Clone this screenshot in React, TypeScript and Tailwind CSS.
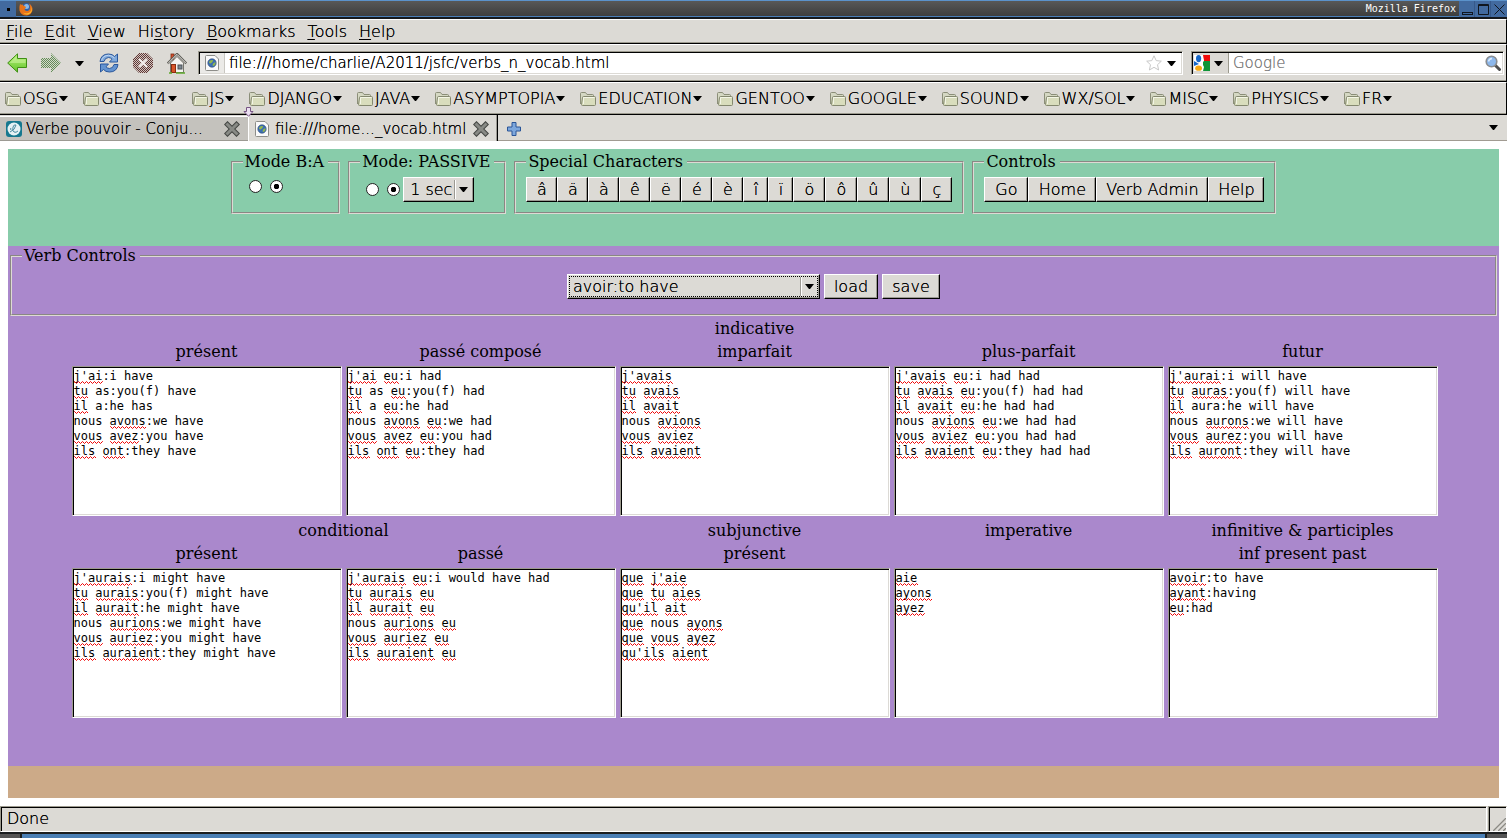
import React from "react";

const RAISED =
  "border border-t-white border-l-white border-b-black border-r-black bg-[#dcdad5] shadow-[inset_-1px_-1px_0_#9c9a93]";
const SUNKEN =
  "border border-t-[#9c9a8e] border-l-[#9c9a8e] border-b-white border-r-white bg-white shadow-[inset_1px_1px_0_#000,inset_-1px_-1px_0_#dcdad5]";
const BAR =
  "flex items-center border-t border-b border-r border-t-white border-b-black border-r-black bg-[#dcdad5] shadow-[inset_0_-1px_0_#9c9a8e]";
const SANS = "font-['DejaVu_Sans_Light','DejaVu_Sans',sans-serif] font-extralight [text-shadow:0_0_0_currentColor]";

function Triangle() {
  return (
    <svg width="9" height="5" viewBox="0 0 9 5" className="shrink-0" aria-hidden="true">
      <path d="M0 0H9L5 5H4Z" fill="#000" />
    </svg>
  );
}

function FolderIcon() {
  return (
    <svg width="16" height="14" viewBox="0 0 16 14" className="shrink-0" aria-hidden="true">
      <path d="M.5 12V1.500Q.5.5 1.500.5H5.500L7 2.500H12.500Q13.500 2.500 13.500 3.500V4.500" fill="#d5d8c3" stroke="#8b8e78" />
      <path d="M.5 12V2" stroke="#8b8e78" />
      <path d="M3.500 4.500H14.500Q15.500 4.500 15.500 5.500V12.500Q15.500 13.500 14.500 13.500H2.500Q1.500 13.500 1.500 12.500L2.500 5.500Q2.600 4.500 3.500 4.500Z" fill="#d9ddbd" stroke="#84886f" />
      <path d="M3.500 12V5.500H14.500" fill="none" stroke="#f3f5e6" />
    </svg>
  );
}

function FirefoxIcon() {
  return (
    <svg width="14" height="14" viewBox="0 0 14 14" aria-hidden="true">
      <circle cx="7.500" cy="6.500" r="5.500" fill="#2d5fa8" />
      <circle cx="7.500" cy="4.500" r="2.500" fill="#8cb9e6" />
      <path d="M1 2Q2 3 3.500 2.600Q4.500 3 4.500 4Q7 3.800 7 5.500Q6 6 5.500 7Q6 9.500 8.500 9Q11 8.500 11 5Q10.800 3 10 1.500Q13.800 4 13.500 8Q12.500 13 7.500 13.500Q2 13.500 .5 8.500Q0 5 1 2Z" fill="#e8731a" />
      <path d="M12 4Q13.500 8 10.500 10.500Q7.500 12.500 4 10.500Q6 13 9 12.500Q13 11 13 7Z" fill="#fbc02d" />
    </svg>
  );
}

function BackIcon() {
  return (
    <svg width="20" height="20" viewBox="0 0 20 20" aria-hidden="true">
      <defs>
        <linearGradient id="green" x1="0" y1="0" x2="0" y2="1">
          <stop offset="0" stopColor="#b9f27c" />
          <stop offset="1" stopColor="#62c42a" />
        </linearGradient>
      </defs>
      <path d="M.7 10L10.500.8V5.500H19.500V14.500H10.500V19.200Z" fill="url(#green)" stroke="#3f8f14" />
      <path d="M2.500 10L9.500 3.300V6.500H18.500V10Z" fill="#d3f7a8" opacity=".5" />
    </svg>
  );
}

function ForwardIcon() {
  return (
    <svg width="20" height="20" viewBox="0 0 20 20" aria-hidden="true">
      <defs>
        <pattern id="stipple-green" width="2" height="2" patternUnits="userSpaceOnUse">
          <rect width="2" height="2" fill="#d3dcc8" />
          <rect width="1" height="1" fill="#64885a" />
          <rect x="1" y="1" width="1" height="1" fill="#64885a" />
        </pattern>
      </defs>
      <path d="M20 10L10 0V5H0V15H10V20Z" fill="url(#stipple-green)" />
    </svg>
  );
}

function ReloadIcon() {
  return (
    <svg width="20" height="20" viewBox="0 0 20 20" aria-hidden="true">
      <path d="M1 8.500Q2 1 9.500 1Q13.500 1 15.500 3.500L18.500 1V9H10.500L13 6.200Q11.500 4.500 9.500 4.500Q6 4.500 5 8.500Z" fill="#7fa9dc" stroke="#2a579c" />
      <path d="M19 11.500Q18 19 10.500 19Q6.500 19 4.500 16.500L1.500 19V11H9.500L7 13.800Q8.500 15.500 10.500 15.500Q14 15.500 15 11.500Z" fill="#6393d0" stroke="#2a579c" />
      <path d="M2.500 7.500Q4 2.500 9.500 2.300Q13 2.500 15.500 5" fill="none" stroke="#c0d6f1" />
    </svg>
  );
}

function StopIcon() {
  return (
    <svg width="20" height="20" viewBox="0 0 20 20" aria-hidden="true">
      <defs>
        <pattern id="stipple-red" width="2" height="2" patternUnits="userSpaceOnUse">
          <rect width="2" height="2" fill="#d2c3be" />
          <rect width="1" height="1" fill="#5e3836" />
          <rect x="1" y="1" width="1" height="1" fill="#5e3836" />
        </pattern>
      </defs>
      <path d="M6 0H14L20 6V14L14 20H6L0 14V6Z" fill="url(#stipple-red)" />
      <path d="M6 6L14 14M14 6L6 14" stroke="#f2ecea" strokeWidth="2.200" />
    </svg>
  );
}

function HomeIcon() {
  return (
    <svg width="20" height="21" viewBox="0 0 20 21" aria-hidden="true">
      <rect x="4" y="1" width="3" height="6" fill="#d9512c" stroke="#7a2a12" strokeWidth=".8" />
      <path d="M3.500 10L10 3.500L16.500 10V19.500H3.500Z" fill="#f4f3f0" stroke="#77756d" />
      <path d="M.7 10.500L10 1L19.300 10.500" fill="none" stroke="#5d5c56" strokeWidth="2.400" />
      <path d="M1.200 10.200L10 1.400L18.800 10.200" fill="none" stroke="#efeeea" strokeWidth="1" />
      <rect x="4.500" y="11.500" width="4" height="8" fill="#d9552a" stroke="#8a2d10" />
      <rect x="11" y="12" width="4" height="4" fill="#7c8790" stroke="#4c5358" />
      <path d="M2 20H5M9 20H18" stroke="#5ea82c" strokeWidth="1.600" />
    </svg>
  );
}

function PageIcon() {
  return (
    <svg width="14" height="16" viewBox="0 0 14 16" className="shrink-0" aria-hidden="true">
      <path d="M1.500.5H10L13.500 4V14.500Q13.500 15.500 12.500 15.500H1.500Q.5 15.500.5 14.500V1.500Q.5.5 1.500.5Z" fill="#fafafa" stroke="#8d8d89" />
      <circle cx="7" cy="8" r="4.200" fill="#3c6eb4" stroke="#27436f" strokeWidth=".6" />
      <path d="M4.500 6Q6 4.500 8 5L7.500 7L5.500 8.500L4 8ZM8 8.500L10.500 7Q11 9.500 9 11L7.500 10.500Z" fill="#93b84c" />
    </svg>
  );
}

function GoogleIcon() {
  return (
    <svg width="16" height="16" viewBox="0 0 16 16" className="shrink-0" aria-hidden="true">
      <rect width="16" height="16" fill="#fff" />
      <path d="M8 0H16V6H10Z" fill="#f00a0a" />
      <path d="M9 6H16V16H9Z" fill="#0f9438" />
      <path d="M0 6L5 9L0 11Z" fill="#1667c8" />
      <path d="M9 0L10 6L8 8L10 12L9 16L6 16V0Z" fill="#fff" />
      <ellipse cx="4.600" cy="3.600" rx="2.600" ry="3.600" fill="#1667c8" />
      <ellipse cx="4.600" cy="13.200" rx="3.400" ry="2.600" fill="#f8a912" />
    </svg>
  );
}

function CloseIcon() {
  return (
    <svg width="16" height="16" viewBox="0 0 16 16" aria-hidden="true">
      <path d="M3.500 3.500L12.500 12.500M12.500 3.500L3.500 12.500" stroke="#444643" strokeWidth="5" strokeLinecap="square" />
      <path d="M3.500 3.500L12.500 12.500M12.500 3.500L3.500 12.500" stroke="#888a85" strokeWidth="3" strokeLinecap="square" />
    </svg>
  );
}

const MENUS: [string, string, string][] = [
  ["", "F", "ile"],
  ["", "E", "dit"],
  ["", "V", "iew"],
  ["Hi", "s", "tory"],
  ["", "B", "ookmarks"],
  ["", "T", "ools"],
  ["", "H", "elp"],
];

const BOOKMARKS = [
  "OSG", "GEANT4", "JS", "DJANGO", "JAVA", "ASYMPTOPIA", "EDUCATION",
  "GENTOO", "GOOGLE", "SOUND", "WX/SOL", "MISC", "PHYSICS", "FR",
];

function TitleBar() {
  return (
    <div className="flex h-[19px] items-center border-t border-b-2 border-t-[#5b92cb] border-b-[#15181c] bg-linear-to-b from-[#585858] to-[#3c3c3c] shadow-[inset_0_-1px_0_#4a7db5]">
      <div className="flex h-4 w-4 items-center justify-center bg-[#426a9f]">
        <span className="h-[3px] w-[3px] bg-black" />
      </div>
      <span className="ml-[3px]"><FirefoxIcon /></span>
      <span className="ml-auto mr-[3px] font-['DejaVu_Sans_Mono',monospace] text-[10px] leading-4 text-white [text-shadow:none]">
        Mozilla Firefox
      </span>
      <svg width="48" height="16" viewBox="0 0 48 16" aria-hidden="true">
        <rect width="48" height="16" fill="#426a9f" />
        <path d="M15.500 0V16M31.500 0V16" stroke="#36598a" />
        <rect x="3.500" y="11.500" width="10" height="2" fill="none" stroke="#10161f" />
        <path d="M19.500 3.500H29.500V13.500H19.500ZM19.500 4.500H29.500" fill="none" stroke="#10161f" />
        <path d="M35.500 3.500L45.500 13.500M45.500 3.500L35.500 13.500" stroke="#10161f" />
      </svg>
    </div>
  );
}

function MenuBar() {
  return (
    <nav className={`${BAR} h-[25px] gap-[12px] pl-[6px]`} aria-label="Menu">
      {MENUS.map(([pre, key, post]) => (
        <button key={key + post} type="button" className="leading-[20px]">
          {pre}
          <span className="underline underline-offset-2">{key}</span>
          {post}
        </button>
      ))}
    </nav>
  );
}

function NavBar() {
  return (
    <div className={`${BAR} h-[38px] pl-[7px] pr-[2px]`}>
      <button type="button" aria-label="Back"><BackIcon /></button>
      <button type="button" aria-label="Forward" className="ml-[14px]"><ForwardIcon /></button>
      <button type="button" aria-label="Recent pages" className="ml-[14px]"><Triangle /></button>
      <button type="button" aria-label="Reload" className="ml-[15px]"><ReloadIcon /></button>
      <button type="button" aria-label="Stop" className="ml-[14px]"><StopIcon /></button>
      <button type="button" aria-label="Home page" className="ml-[14px]"><HomeIcon /></button>
      <div className={`${SUNKEN} ml-[11px] flex h-6 min-w-0 flex-1 items-center pr-[6px]`}>
        <span className="m-px flex h-5 w-[25px] items-center justify-center border-r border-[#c9c7c1] bg-[#ebeae7]">
          <PageIcon />
        </span>
        <input
          aria-label="Location"
          defaultValue="file:///home/charlie/A2011/jsfc/verbs_n_vocab.html"
          className="ml-[3px] h-5 min-w-0 flex-1 bg-transparent text-[15px] outline-none"
        />
        <svg width="16" height="16" viewBox="0 0 16 16" aria-hidden="true">
          <path d="M8 .8L10.200 5.600L15.300 6.200L11.500 9.700L12.600 15L8 12.300L3.400 15L4.500 9.700L.7 6.200L5.800 5.600Z" fill="#fff" stroke="#c8c8c8" />
        </svg>
        <button type="button" aria-label="Show history" className="ml-[5px]"><Triangle /></button>
      </div>
      <div className={`${SUNKEN} ml-[8px] flex h-6 w-[313px] items-center pr-[2px]`}>
        <button type="button" aria-label="Search engine" className="m-px flex h-5 w-9 items-center gap-[4px] border-r border-[#9c9a8e] bg-[#dcdad5] pl-px">
          <GoogleIcon />
          <Triangle />
        </button>
        <input aria-label="Search" placeholder="Google" className="ml-[3px] h-5 min-w-0 flex-1 bg-transparent text-[15px] outline-none placeholder:text-[#808080]" />
        <svg width="16" height="16" viewBox="0 0 16 16" aria-hidden="true">
          <path d="M10 10L14.500 14.500" stroke="#4e4e4e" strokeWidth="3" strokeLinecap="round" />
          <circle cx="6.500" cy="6.500" r="5.300" fill="#8db8ec" stroke="#8a8d90" strokeWidth="1.600" />
          <path d="M3.500 6.500Q4 3.800 7 3.500" stroke="#dcebfb" strokeWidth="1.500" fill="none" />
        </svg>
      </div>
    </div>
  );
}

function BookmarkBar() {
  return (
    <div className={`${BAR} relative h-[33px] gap-[15px] pl-[5px]`}>
      {BOOKMARKS.map((name) => (
        <button key={name} type="button" className="flex shrink-0 items-center leading-[20px]">
          <FolderIcon />
          <span className="ml-[2px] mr-px">{name}</span>
          <Triangle />
        </button>
      ))}
      <svg width="11" height="10" viewBox="0 0 11 10" className="absolute left-[243px] top-[24px]" aria-hidden="true">
        <path d="M3.500.5H7.500V4.500H10L5.500 9.300L1 4.500H3.500Z" fill="#eadff0" stroke="#775484" />
      </svg>
    </div>
  );
}

function TabBar() {
  return (
    <div className="flex h-[26px] items-end bg-[#dcdad5] text-[15px] shadow-[inset_0_-1px_0_#a19b92]">
      <div className="flex h-[25px] w-[248px] items-center border-t border-b border-t-white border-b-[#9c9a93] bg-[#c4c2bd] pl-[6px] pr-[8px]">
        <svg width="16" height="16" viewBox="0 0 16 16" className="shrink-0" aria-hidden="true">
          <rect width="16" height="16" rx="3" fill="#15788f" />
          <circle cx="8" cy="8" r="6.500" fill="#e5f2f5" />
          <path d="M4 11Q9 9 10 4Q8 3 7 6Q6 10 8 11Q10 12 12 10M5 7Q4 8 5 9" fill="none" stroke="#4a8ba0" />
        </svg>
        <button type="button" className="ml-[4px] truncate leading-[20px]">Verbe pouvoir - Conju...</button>
        <button type="button" aria-label="Close tab" className="ml-auto"><CloseIcon /></button>
      </div>
      <div className="flex h-[26px] w-[250px] items-center border-l border-r border-l-white border-r-black bg-[#dcdad5] pl-[6px] pr-[8px] pt-[2px] shadow-[inset_-1px_0_0_#9c9a93]">
        <PageIcon />
        <button type="button" className="ml-[6px] shrink-0 leading-[20px]">file:///home..._vocab.html</button>
        <button type="button" aria-label="Close tab" className="ml-auto"><CloseIcon /></button>
      </div>
      <button type="button" aria-label="New tab" className="mb-[5px] ml-[9px]">
        <svg width="14" height="14" viewBox="0 0 14 14" aria-hidden="true">
          <path d="M5 .5H9V5H13.500V9H9V13.500H5V9H.5V5H5Z" fill="#7da7dc" stroke="#2a5598" />
        </svg>
      </button>
      <button type="button" aria-label="List all tabs" className="mb-[11px] ml-auto mr-[9px]"><Triangle /></button>
    </div>
  );
}

function Group({ title, className = "", children }: { title: string; className?: string; children: React.ReactNode }) {
  return (
    <fieldset className={`border-2 border-[#dedad4] px-[10px] [border-style:groove] ${className}`}>
      <legend className="pl-[2px] pr-[4px] leading-[19px]">{title}</legend>
      {children}
    </fieldset>
  );
}

function Radio({ name, label, checked }: { name: string; label: string; checked?: boolean }) {
  return (
    <input
      type="radio"
      name={name}
      aria-label={label}
      defaultChecked={checked}
      className="h-[13px] w-[13px] shrink-0 appearance-none rounded-full border border-[#222] bg-white checked:bg-[radial-gradient(circle,#000_0_2.5px,#fff_3px)]"
    />
  );
}

function PushButton({ label, className = "" }: { label: string; className?: string }) {
  return (
    <button type="button" className={`${RAISED} ${SANS} h-[25px] leading-[20px] ${className}`}>
      {label}
    </button>
  );
}

function DropDown({ label, value, className = "", focused }: { label: string; value: string; className?: string; focused?: boolean }) {
  return (
    <div className={`relative ${className}`}>
      <select aria-label={label} defaultValue={value} className={`${RAISED} ${SANS} block h-[25px] w-full appearance-none leading-[20px] outline-none ${focused ? "pl-[5px]" : "pl-[6px]"}`}>
        <option>{value}</option>
      </select>
      <span className="pointer-events-none absolute inset-y-[3px] right-[3px] flex w-[16px] items-center justify-center border-l border-white shadow-[-1px_0_0_#9c9a93]">
        <Triangle />
      </span>
      {focused && <span className="pointer-events-none absolute inset-[2px] border border-dotted border-black" />}
    </div>
  );
}

type Mark = [row: number, col: number, length: number];

/* Words wrapped in underscores are flagged by the spell checker. */
function parse(source: string): { text: string; marks: Mark[] } {
  const marks: Mark[] = [];
  const text = source
    .split("|")
    .map((line, row) => {
      let out = "";
      line.split("_").forEach((part, i) => {
        if (i % 2 === 1) marks.push([row, out.length, part.length]);
        out += part;
      });
      return out;
    })
    .join("\n");
  return { text, marks };
}

/* Advance of one DejaVu Sans Mono character at 12px. */
const ADVANCE = 12 * 0.602;

function Squiggle({ row, col, length }: { row: number; col: number; length: number }) {
  const left = Math.round(col * ADVANCE);
  const width = Math.round((col + length) * ADVANCE) - left;
  let d = "M-1 1.5";
  for (let x = 0; x <= width + 2; x += 2) d += `L${x + 0.5} ${x % 4 === 0 ? 0.5 : 2.5}`;
  return (
    <svg width={width} height="3" className="absolute overflow-hidden" style={{ left, top: row * 15 + 12 }}>
      <path d={d} fill="none" stroke="#f00000" />
    </svg>
  );
}

function VerbBox({ label, source }: { label: string; source: string }) {
  const { text, marks } = parse(source);
  return (
    <div className="relative font-['DejaVu_Sans_Mono',monospace] text-[12px] leading-[15px]">
      <textarea
        aria-label={label}
        spellCheck={false}
        defaultValue={text}
        className={`${SUNKEN} block h-[150px] w-full resize-none overflow-hidden px-px pt-[2px] outline-none`}
      />
      <div className="pointer-events-none absolute left-[2px] top-[3px]" aria-hidden="true">
        {marks.map(([row, col, length]) => (
          <Squiggle key={`${row}-${col}`} row={row} col={col} length={length} />
        ))}
      </div>
    </div>
  );
}

const INDICATIVE = [
  { label: "présent", source: "_j'ai_:i have|_tu_ as:you(f) have|_il_ a:he has|nous _avons_:we have|_vous_ _avez_:you have|_ils_ _ont_:they have" },
  { label: "passé composé", source: "_j'ai_ _eu_:i had|_tu_ as _eu_:you(f) had|_il_ a _eu_:he had|nous _avons_ _eu_:we had|_vous_ _avez_ _eu_:you had|_ils_ _ont_ _eu_:they had" },
  { label: "imparfait", source: "_j'avais_|_tu_ _avais_|_il_ _avait_|nous _avions_|_vous_ _aviez_|_ils_ _avaient_" },
  { label: "plus-parfait", source: "_j'avais_ _eu_:i had had|_tu_ _avais_ _eu_:you(f) had had|_il_ _avait_ _eu_:he had had|nous _avions_ _eu_:we had had|_vous_ _aviez_ _eu_:you had had|_ils_ _avaient_ _eu_:they had had" },
  { label: "futur", source: "_j'aurai_:i will have|_tu_ _auras_:you(f) will have|_il_ aura:he will have|nous _aurons_:we will have|_vous_ _aurez_:you will have|_ils_ _auront_:they will have" },
];

const OTHERS = [
  { label: "présent", source: "_j'aurais_:i might have|_tu_ _aurais_:you(f) might have|_il_ _aurait_:he might have|nous _aurions_:we might have|_vous_ _auriez_:you might have|_ils_ _auraient_:they might have" },
  { label: "passé", source: "_j'aurais_ _eu_:i would have had|_tu_ _aurais_ _eu_|_il_ _aurait_ _eu_|nous _aurions_ _eu_|_vous_ _auriez_ _eu_|_ils_ _auraient_ _eu_" },
  { label: "présent", source: "_que_ _j'aie_|_que_ _tu_ _aies_|_qu'il_ _ait_|_que_ nous _ayons_|_que_ _vous_ _ayez_|_qu'ils_ _aient_" },
  { label: "", source: "_aie_|_ayons_|_ayez_" },
  { label: "inf present past", source: "_avoir_:to have|_ayant_:having|_eu_:had" },
];

const CHARACTERS: [string, string][] = [
  ["â", "w-[31px]"], ["ä", "w-[31px]"], ["à", "w-[31px]"], ["ê", "w-[31px]"], ["ë", "w-[31px]"],
  ["é", "w-[31px]"], ["è", "w-[31px]"], ["î", "w-[25px]"], ["ï", "w-[25px]"], ["ö", "w-[32px]"],
  ["ô", "w-[32px]"], ["û", "w-[32px]"], ["ù", "w-[32px]"], ["ç", "w-[31px]"],
];

function VerbPage() {
  return (
    <main className="flex-1 bg-white p-2 font-['DejaVu_Serif',serif] [text-shadow:none]">
      <section className="flex h-[97px] items-start justify-center gap-2 bg-[#88ccaa] pt-[3px]">
        <Group title="Mode B:A" className="h-[62px]">
          <div className="flex gap-[8px] pl-[6px] pt-[9px]">
            <Radio name="direction" label="A:B" />
            <Radio name="direction" label="B:A" checked />
          </div>
        </Group>
        <Group title="Mode: PASSIVE" className="h-[62px]">
          <div className="flex items-center gap-[8px] pl-[6px] pt-[6px]">
            <Radio name="mode" label="Active" />
            <Radio name="mode" label="Passive" checked />
            <DropDown label="Delay" value="1 sec" className="-ml-[5px] w-[71px]" />
          </div>
        </Group>
        <Group title="Special Characters" className="h-[62px]">
          <div className="flex pt-[6px]">
            {CHARACTERS.map(([c, w]) => <PushButton key={c} label={c} className={w} />)}
          </div>
        </Group>
        <Group title="Controls" className="h-[62px]">
          <div className="flex pt-[6px]">
            <PushButton label="Go" className="w-[44px]" />
            <PushButton label="Home" className="w-[68px]" />
            <PushButton label="Verb Admin" className="w-[112px]" />
            <PushButton label="Help" className="w-[56px]" />
          </div>
        </Group>
      </section>

      <section className="h-[520px] bg-[#aa88cc] px-[2px]">
        <Group title="Verb Controls" className="h-[70px]">
          <div className="flex justify-center gap-[4px] pt-[9px]">
            <DropDown label="Verb" value="avoir:to have" className="w-[253px]" focused />
            <PushButton label="load" className="w-[54px]" />
            <PushButton label="save" className="w-[58px]" />
          </div>
        </Group>
        <div className="grid grid-cols-[repeat(5,270px)] justify-center gap-x-[4px] pl-[2px] pt-px text-center leading-[23px]">
          <h2 className="col-span-5">indicative</h2>
          {INDICATIVE.map((t) => <h3 key={t.label}>{t.label}</h3>)}
          {INDICATIVE.map((t) => (
            <div key={t.label} className="py-[3px] text-left">
              <VerbBox label={`indicative ${t.label}`} source={t.source} />
            </div>
          ))}
          <h2 className="col-span-2">conditional</h2>
          <h2>subjunctive</h2>
          <h2>imperative</h2>
          <h2>infinitive &amp; participles</h2>
          {OTHERS.map((t, i) => <h3 key={i}>{t.label}</h3>)}
          {OTHERS.map((t, i) => (
            <div key={i} className="py-[3px] text-left">
              <VerbBox label={t.label || "imperative"} source={t.source} />
            </div>
          ))}
        </div>
      </section>
      <footer className="h-8 bg-[#ccaa88]" />
    </main>
  );
}

function StatusBar() {
  return (
    <div>
      <div className="flex h-[26px] bg-[#dcdad5]">
        <div className="flex-1 border border-t-[#9c9a8e] border-l-[#9c9a8e] border-b-white border-r-white pl-[6px] leading-[23px] shadow-[inset_1px_1px_0_#000]">
          Done
        </div>
        <div className="ml-px flex w-[19px] items-end border border-t-[#9c9a8e] border-l-[#9c9a8e] border-b-white border-r-white pl-[2px] shadow-[inset_1px_1px_0_#000]">
          <svg width="15" height="15" viewBox="0 0 15 15" aria-hidden="true">
            <path d="M1 15L15 1M6 15L15 6M11 15L15 11" stroke="#fff" />
            <path d="M2 15L15 2M7 15L15 7M12 15L15 12" stroke="#8d8b84" strokeWidth="1.500" />
          </svg>
        </div>
      </div>
      <div className="flex h-[6px] border-t-2 border-[#1b1e20] bg-[#4a7fb5]">
        <div className="w-[22px] border-r-2 border-[#1b1e20] bg-[#555]" />
        <div className="ml-auto w-[22px] border-l-2 border-[#1b1e20] bg-[#555]" />
      </div>
    </div>
  );
}

export default function App() {
  return (
    <div className={`${SANS} flex min-h-screen flex-col text-[16px] text-black`}>
      <header className="[&_button]:[text-shadow:inherit] [&_input]:[text-shadow:inherit]">
        <TitleBar />
        <MenuBar />
        <NavBar />
        <BookmarkBar />
        <TabBar />
      </header>
      <VerbPage />
      <StatusBar />
    </div>
  );
}
